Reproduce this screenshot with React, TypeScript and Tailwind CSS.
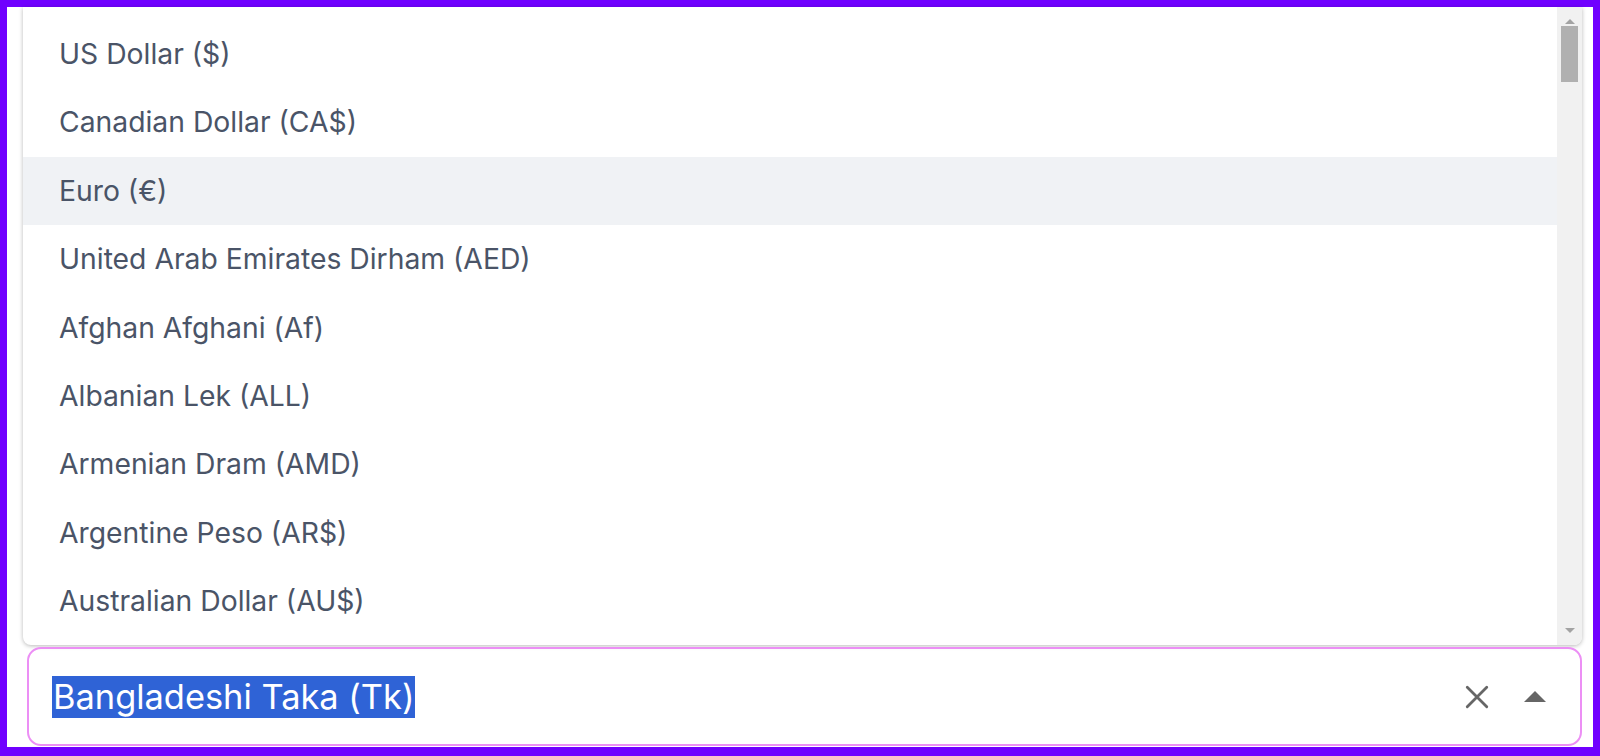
const CURRENCIES = [
  "US Dollar ($)",
  "Canadian Dollar (CA$)",
  "Euro (€)",
  "United Arab Emirates Dirham (AED)",
  "Afghan Afghani (Af)",
  "Albanian Lek (ALL)",
  "Armenian Dram (AMD)",
  "Argentine Peso (AR$)",
  "Australian Dollar (AU$)",
];

const HIGHLIGHTED = 2;

export default function App() {
  return (
    <div
      className="w-[1600px] h-[756px] bg-[#7000ff] pt-[7px] pl-[7px] pr-[7px] pb-[9px]"
      style={{ fontFamily: "Inter, 'Noto Sans', sans-serif" }}
    >
      <div className="w-full h-full bg-white flex flex-col pl-[16px] pr-[11px]">
        {/* dropdown list */}
        <div className="h-[638px] flex rounded-b-[8px] bg-white shadow-[0_1px_4px_rgba(0,0,0,0.28)] overflow-hidden">
          <div className="flex-1 pt-[13px]">
            {CURRENCIES.map((c, i) => (
              <div
                key={c}
                className={
                  "h-[68.4px] flex items-center pl-[36px] text-[28.3px] text-[#4a5467] " +
                  (i === HIGHLIGHTED ? "bg-[#f0f2f5]" : "")
                }
              >
                {c}
              </div>
            ))}
          </div>
          {/* scrollbar */}
          <div className="w-[25px] bg-[#f1f1f1] flex flex-col items-center">
            <div className="h-[17px] flex items-end justify-center">
              <div className="w-0 h-0 border-l-[5px] border-r-[5px] border-b-[5px] border-l-transparent border-r-transparent border-b-[#a3a3a3]" />
            </div>
            <div className="mt-[2px] w-[17px] h-[56px] bg-[#b0b0b0]" />
            <div className="flex-1" />
            <div className="h-[17px] flex items-start justify-center">
              <div className="w-0 h-0 border-l-[5px] border-r-[5px] border-t-[5px] border-l-transparent border-r-transparent border-t-[#a3a3a3]" />
            </div>
          </div>
        </div>

        {/* input */}
        <div className="mt-[2px] ml-[4px] h-[99px] rounded-[14px] border-2 border-[#ec8ff5] flex items-center pl-[23px] pr-[34px]">
          <span className="bg-[#2f63d6] text-white text-[34.4px] leading-[42px] px-[1px]">
            Bangladeshi Taka (Tk)
          </span>
          <div className="flex-1" />
          <svg width="26" height="26" viewBox="0 0 24 24" className="mr-[34px]">
            <path d="M3 3 L21 21 M21 3 L3 21" stroke="#666" strokeWidth="2.6" strokeLinecap="round" />
          </svg>
          <div className="w-0 h-0 border-l-[11px] border-r-[11px] border-b-[11px] border-l-transparent border-r-transparent border-b-[#666]" />
        </div>
      </div>
    </div>
  );
}
